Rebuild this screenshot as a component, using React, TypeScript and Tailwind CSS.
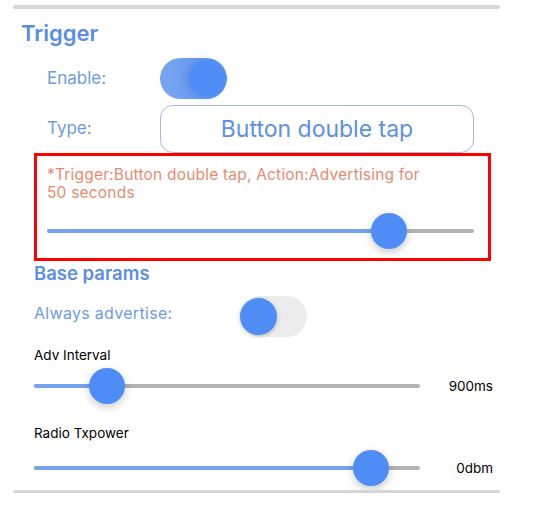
import React from "react";

const Toggle = ({ on }: { on: boolean }) => (
  <div
    className={
      "relative h-[41px] w-[67px] rounded-full " +
      (on ? "bg-gradient-to-r from-[#78a5f0] to-[#6196f2]" : "bg-[#ececec]")
    }
  >
    <div
      className={
        "absolute top-[2px] h-[37px] w-[37px] rounded-full bg-[#4e8cf6] " +
        (on ? "right-[1px] shadow-[-4px_0_8px_rgba(40,90,200,0.25)]" : "left-0 top-[1px] shadow-[0_1px_4px_rgba(0,0,0,0.25)]")
      }
    />
  </div>
);

const Slider = ({ pct, width }: { pct: number; width: number }) => (
  <div className="relative h-[36px]" style={{ width }}>
    <div className="absolute left-0 right-0 top-[16px] h-[4px] rounded-full bg-[#b3b3b3]" />
    <div
      className="absolute left-0 top-[16px] h-[4px] rounded-full bg-[#76a3ee]"
      style={{ width: `${pct}%` }}
    />
    <div
      className="absolute top-0 h-[36px] w-[36px] -translate-x-1/2 rounded-full bg-[#4f8df6] shadow-[0_3px_8px_rgba(0,0,0,0.22)]"
      style={{ left: `${pct}%` }}
    />
  </div>
);

export default function App() {
  return (
    <div className="min-h-[506px] w-[536px] bg-white pt-[5px] font-['Inter',sans-serif]">
      <div className="ml-[13px] w-[487px]">
        <div className="h-[4px] rounded-full bg-[#d6d6d6] blur-[0.5px]" />

        <h2 className="ml-[8px] mt-[10px] text-[22px] font-semibold leading-[28px] text-[#5a8de2]">
          Trigger
        </h2>

        <div className="mt-[11px] flex items-center">
          <span className="ml-[34px] w-[113px] text-[17px] text-[#6c9be2]">Enable:</span>
          <Toggle on />
        </div>

        <div className="mt-[6px] flex items-center">
          <span className="ml-[34px] w-[113px] text-[17px] text-[#6c9be2]">Type:</span>
          <div className="flex h-[48px] w-[314px] items-center justify-center rounded-[13px] border border-[#a7b8d6] text-[23px] text-[#5b8fe8]">
            Button double tap
          </div>
        </div>

        <div className="ml-[21px] h-[108px] w-[457px] border-[3px] border-[#ff0000] pl-[10px] pt-[10px]">
          <p className="w-[388px] text-[15.5px] leading-[18px] tracking-[0.2px] text-[#e98a6f]">
            *Trigger:Button double tap, Action:Advertising for 50 seconds
          </p>
          <div className="mt-[11px]">
            <Slider pct={80} width={427} />
          </div>
        </div>

        <h3 className="ml-[21px] mt-[1px] text-[18.5px] font-semibold leading-[22px] text-[#5b8ee6]">
          Base params
        </h3>

        <div className="mt-[12px] flex items-center">
          <span className="ml-[21px] mb-[7px] w-[206px] text-[16px] tracking-[0.3px] text-[#6c9be6]">
            Always advertise:
          </span>
          <Toggle on={false} />
        </div>

        <div className="ml-[21px] mt-[10px] text-[13.5px] leading-[16px] text-black">Adv Interval</div>
        <div className="mt-[5px] flex items-center">
          <div className="ml-[21px]">
            <Slider pct={19} width={386} />
          </div>
          <span className="ml-auto mr-[7px] text-[13.5px] text-black">900ms</span>
        </div>

        <div className="ml-[21px] mt-[21px] text-[13.5px] leading-[16px] text-black">Radio Txpower</div>
        <div className="mt-[9px] flex items-center">
          <div className="ml-[21px]">
            <Slider pct={87.3} width={386} />
          </div>
          <span className="ml-auto mr-[7px] text-[13.5px] text-black">0dbm</span>
        </div>

        <div className="mt-[4px] h-[3px] rounded-full bg-[#d6d6d6] blur-[0.5px]" />
      </div>
    </div>
  );
}
